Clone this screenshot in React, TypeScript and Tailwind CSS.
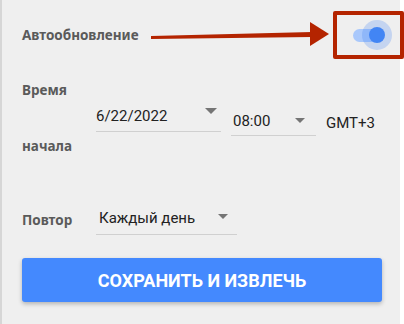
import React from "react";

function Caret({ w = 12 }: { w?: number }) {
  return (
    <svg width={w} height={w / 2} viewBox="0 0 12 6" className="shrink-0">
      <polygon points="0,0 12,0 6,6" fill="#757575" />
    </svg>
  );
}

export default function App() {
  const label = "text-[13.5px] font-bold text-[#5a5a5a] leading-[16px]";
  const field = "text-[15px] text-[#222] leading-[20px]";
  return (
    <div className="relative w-[404px] h-[324px] bg-white overflow-hidden" style={{ fontFamily: "Roboto, 'Noto Sans', sans-serif" }}>
      <div className="w-[400px] h-[324px] bg-[#efefef] border-l-2 border-[#d6d6d6] pl-[20px] pt-[27px]">
        <div className="flex items-center h-[16px]">
          <span className={label} style={{ fontFamily: "'Noto Sans', sans-serif" }}>Автообновление</span>
        </div>

        <div className="flex mt-[39px]">
          <div className="w-[74px] h-[72px] flex flex-col justify-between" style={{ fontFamily: "'Noto Sans', sans-serif" }}>
            <span className={label}>Время</span>
            <span className={label}>начала</span>
          </div>
          <div className="mt-[24px] w-[125px] h-[26px] border-b border-[#d0d0d0] flex items-start justify-between pr-[4px]">
            <span className={field}>6/22/2022</span>
            <div className="mt-[2px]"><Caret /></div>
          </div>
          <div className="ml-[10px] mt-[29px] w-[85px] h-[25px] border-b border-[#d0d0d0] flex items-start justify-between pl-[2px] pr-[11px]">
            <span className={field}>08:00</span>
            <div className="mt-[7px]"><Caret w={10} /></div>
          </div>
          <div className="ml-[10px] mt-[29px]">
            <span className={field}>GMT+3</span>
          </div>
        </div>

        <div className="flex mt-[53px]">
          <div className="w-[74px]" style={{ fontFamily: "'Noto Sans', sans-serif" }}>
            <span className={label}>Повтор</span>
          </div>
          <div className="mt-[0px] w-[141px] h-[28px] border-b border-[#d0d0d0] flex items-start justify-between pl-[3px] pr-[9px]">
            <span className={field + " mt-[1px]"}>Каждый день</span>
            <div className="mt-[7px]"><Caret w={10} /></div>
          </div>
        </div>

        <button className="mt-[23px] w-[360px] h-[44px] rounded-[3px] bg-[#4489fe] text-white text-[18px] font-bold shadow-[0_2px_4px_rgba(0,0,0,0.25)] flex items-center justify-center">
          СОХРАНИТЬ И ИЗВЛЕЧЬ
        </button>
      </div>

      {/* toggle */}
      <div className="absolute left-[353px] top-[29px] w-[26px] h-[13px] rounded-full bg-[#a9c8fb]" />
      <div className="absolute left-[362px] top-[20px] w-[30px] h-[30px] rounded-full bg-[#4285f4]/25" />
      <div className="absolute left-[369px] top-[27px] w-[16px] h-[16px] rounded-full bg-[#4285f4]" />

      {/* annotation */}
      <svg className="absolute left-0 top-0" width="404" height="324">
        <polygon points="151,36 312,32 312,37 151,39" fill="#b42400" />
        <polygon points="310,22 329,34 310,46" fill="#b42400" />
      </svg>
      <div className="absolute left-[333px] top-[11px] w-[71px] h-[48px] border-[4px] border-[#b42400] rounded-[2px]" />
    </div>
  );
}
